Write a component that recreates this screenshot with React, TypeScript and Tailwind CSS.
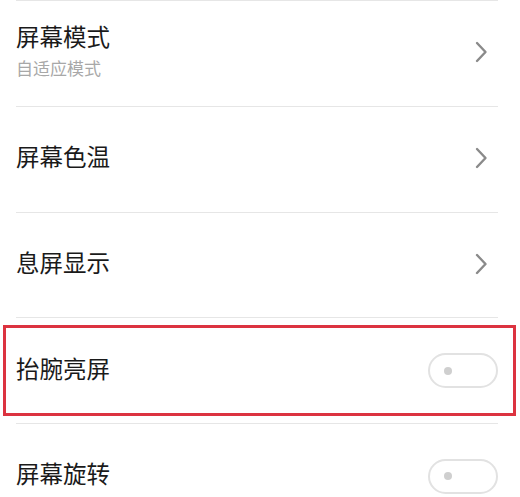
import * as React from 'react';

type Row = {
    title: string;
    subtitle?: string;
    kind: 'link' | 'toggle';
};

const rows: Row[] = [
    { title: '屏幕模式', subtitle: '自适应模式', kind: 'link' },
    { title: '屏幕色温', kind: 'link' },
    { title: '息屏显示', kind: 'link' },
    { title: '抬腕亮屏', kind: 'toggle' },
    { title: '屏幕旋转', kind: 'toggle' },
];

function Chevron() {
    return (
        <svg width="14" height="22" viewBox="0 0 14 22" fill="none">
            <path d="M3 2 L11.5 11 L3 20" stroke="#8a8a8a" strokeWidth="2.4" strokeLinecap="round" strokeLinejoin="round" />
        </svg>
    );
}

function Toggle() {
    return (
        <div className="flex h-[35px] w-[70px] items-center rounded-full border-2 border-[#e2e2e2] bg-white pl-[14px]">
            <span className="block h-[8px] w-[8px] rounded-full bg-[#cfcfcf]" />
        </div>
    );
}

export default function App() {
    return (
        <div
            className="relative h-[497px] w-[520px] overflow-hidden bg-white"
            style={{ fontFamily: '"Noto Sans CJK SC", "Noto Sans", sans-serif' }}
        >
            <div className="ml-[16px] mr-[22px] border-t border-[#e6e6e6]">
                {rows.map((r) => (
                    <div
                        key={r.title}
                        className="flex h-[105.75px] items-center justify-between border-b border-[#e6e6e6]"
                    >
                        <div className="flex flex-col pb-[6px]">
                            <span className="text-[23.5px] leading-[30px] text-[#1a1a1a]">
                                {r.title}
                            </span>
                            {r.subtitle && (
                                <span className="mt-[6px] text-[17px] leading-[22px] text-[#a8a8a8]">
                                    {r.subtitle}
                                </span>
                            )}
                        </div>

                        {r.kind === 'link' ? (
                            <div className="mr-[10px] pb-[2px]">
                                <Chevron />
                            </div>
                        ) : (
                            <Toggle />
                        )}
                    </div>
                ))}
            </div>

            {/* red annotation frame */}
            <div className="pointer-events-none absolute left-[3px] top-[325px] h-[91px] w-[513px] border-[3px] border-[#dc3340]" />
        </div>
    );
}
